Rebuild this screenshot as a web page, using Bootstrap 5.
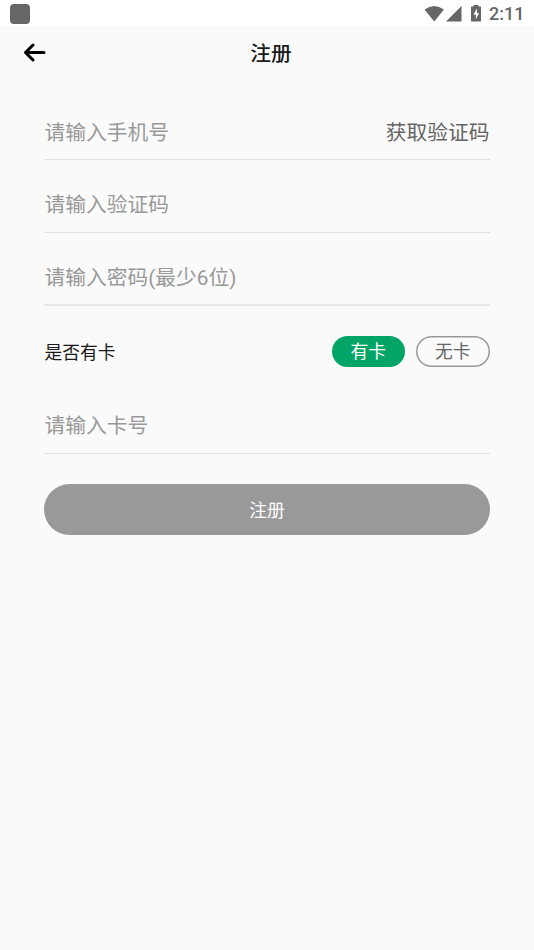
<!DOCTYPE html>
<html lang="zh-CN">
<head>
<meta charset="utf-8">
<meta name="viewport" content="width=device-width, initial-scale=1">
<title>注册</title>
<link href="https://cdn.jsdelivr.net/npm/bootstrap@5.3.0/dist/css/bootstrap.min.css" rel="stylesheet">
<style>
body{background:#fafafa;color:#1a1a1a;font-family:Roboto,"Noto Sans CJK SC",sans-serif;min-height:100vh}
svg{display:block}
.status-bar{height:27px;padding:0 10px;color:#666}
.status-app{width:20px;height:20px;border-radius:4px;background:#666}
.status-time{font-size:18px;line-height:27px;font-weight:500;width:35px;margin-left:5px;white-space:nowrap}
.title-bar{height:51px;padding:0 23px}
.title-bar h1{font-size:20.7px;line-height:30px;font-weight:500;padding:2px 16px 0 0}
.signup{padding:25px 44.5px 0 44.4px}
.field{height:57px;margin-bottom:16px;padding-top:3px;border-bottom:1px solid #e1e1e1}
.field .form-control,.field .btn{font-size:20.75px;line-height:30px}
.field .form-control::placeholder{color:#999;opacity:1}
.field .btn{color:#666}
.field-code{padding-top:1px}
.field-strong{border-bottom-width:2px;border-color:#e6e6e6;margin-bottom:29.500px}
.choice{height:31px;margin-bottom:33.500px;font-size:17.8px}
.choice-label{padding-top:4px}
.pill{width:73.5px;height:31px;font-size:17.8px;line-height:31px;border:0}
.pill-on,.pill-on:hover{background:#03a566;color:#fff}
.pill-off{box-shadow:inset 0 0 0 1.5px #999;color:#666;margin-left:11px}
.field-card{height:54px;padding:0 0 2px;margin-bottom:30px}
.submit{height:51px;font-size:17.8px;line-height:26px;padding-top:8px;background:#999;color:#fff}
</style>
</head>
<body>
<header>
  <div class="status-bar bg-white d-flex align-items-center">
    <span class="status-app me-auto"></span>
    <svg width="60" height="20" viewBox="0 0 60 20" fill="#666" aria-hidden="true">
      <path d="M.5 5.5Q10.200-1.500 20 5.500L10.200 17.500Z"/>
      <path d="M37.500 2V17.500H22Z"/>
      <path fill-rule="evenodd" d="M49.500 1h5v1.500h2.500v15H47v-15h2.500ZM53 4.500 49.500 10.500H51.800V15.500L55 9H53Z"/>
    </svg>
    <span class="status-time">2:11</span>
  </div>
  <nav class="title-bar d-flex align-items-center">
    <a href="#" aria-label="返回"><svg width="24" height="20" viewBox="0 0 24 20" fill="none" stroke="#000" stroke-width="3" stroke-linecap="round" stroke-linejoin="round"><path d="M10 2 2.500 9.500 10 17M3 9.500H21"/></svg></a>
    <h1 class="flex-grow-1 text-center mb-0">注册</h1>
  </nav>
</header>
<main>
  <form class="signup">
    <div class="field d-flex align-items-center">
      <input type="tel" class="form-control border-0 bg-transparent p-0" placeholder="请输入手机号">
      <button type="button" class="btn border-0 p-0 text-nowrap">获取验证码</button>
    </div>
    <div class="field field-code d-flex align-items-center">
      <input type="text" class="form-control border-0 bg-transparent p-0" placeholder="请输入验证码">
    </div>
    <div class="field field-strong d-flex align-items-center">
      <input type="password" class="form-control border-0 bg-transparent p-0" placeholder="请输入密码(最少6位)">
    </div>
    <div class="choice d-flex align-items-center">
      <span class="choice-label me-auto">是否有卡</span>
      <button type="button" class="btn pill pill-on rounded-pill p-0">有卡</button>
      <button type="button" class="btn pill pill-off rounded-pill p-0">无卡</button>
    </div>
    <div class="field field-card d-flex align-items-center">
      <input type="text" class="form-control border-0 bg-transparent p-0" placeholder="请输入卡号">
    </div>
    <button type="button" class="btn submit w-100 rounded-pill border-0">注册</button>
  </form>
</main>
<script src="https://cdn.jsdelivr.net/npm/bootstrap@5.3.0/dist/js/bootstrap.bundle.min.js"></script>
</body>
</html>
